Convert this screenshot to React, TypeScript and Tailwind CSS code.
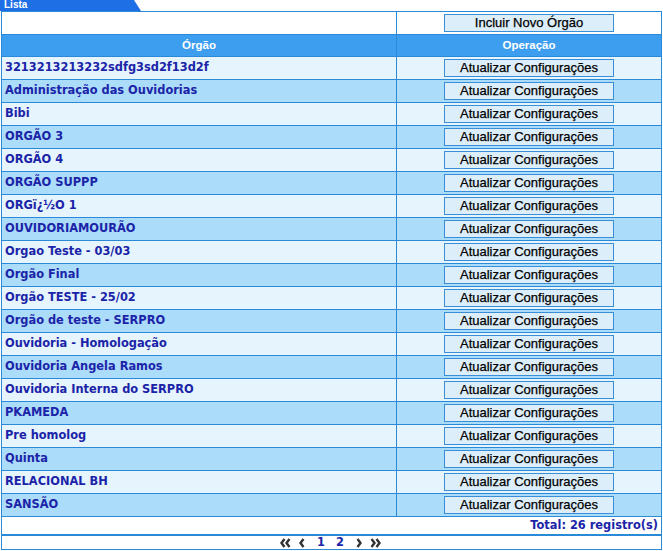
import React from "react";

const rows = [
  "3213213213232sdfg3sd2f13d2f",
  "Administração das Ouvidorias",
  "Bibi",
  "ORGÃO 3",
  "ORGÃO 4",
  "ORGÃO SUPPP",
  "ORGï¿½O 1",
  "OUVIDORIAMOURÃO",
  "Orgao Teste - 03/03",
  "Orgão Final",
  "Orgão TESTE - 25/02",
  "Orgão de teste - SERPRO",
  "Ouvidoria - Homologação",
  "Ouvidoria Angela Ramos",
  "Ouvidoria Interna do SERPRO",
  "PKAMEDA",
  "Pre homolog",
  "Quinta",
  "RELACIONAL BH",
  "SANSÃO",
];

const verdana = { fontFamily: '"DejaVu Sans", Verdana, sans-serif' };
const tahoma = { fontFamily: '"Liberation Sans", Tahoma, Arial, sans-serif' };

function Btn({ children }: { children: React.ReactNode }) {
  return (
    <div
      className="w-[170px] h-[18px] mb-[1px] border border-[#3a8ed8] bg-[#ddeefb] flex items-center justify-center text-[13px] text-black leading-none [-webkit-text-stroke:0.25px_black]"
      style={tahoma}
    >
      <span className="mt-[-1px]">{children}</span>
    </div>
  );
}

function Chev({ dir, double }: { dir: "l" | "r"; double?: boolean }) {
  const w = double ? 12 : 7;
  const pts = (x: number) =>
    dir === "l"
      ? `${x + 4},1 ${x + 1},5 ${x + 4},9`
      : `${x + 1},1 ${x + 4},5 ${x + 1},9`;
  return (
    <svg width={w} height={10} viewBox={`0 0 ${w} 10`}>
      <polyline points={pts(0.5)} fill="none" stroke="#333" strokeWidth={2.4} strokeLinejoin="miter" />
      {double && <polyline points={pts(5.5)} fill="none" stroke="#333" strokeWidth={2.4} strokeLinejoin="miter" />}
    </svg>
  );
}

export default function App() {
  return (
    <div className="w-[663px] h-[551px] bg-white relative overflow-hidden">
      {/* tab */}
      <div className="h-[11px] relative">
        <div className="absolute left-0 top-0 h-[11px] w-[141px] bg-[#1e6fe6] [clip-path:polygon(0_0,134px_0,141px_11px,0_11px)]" />
        <div
          className="absolute left-[4px] top-[-1px] text-[10px] font-bold text-white leading-[12px]"
          style={tahoma}
        >
          Lista
        </div>
      </div>
      <div className="ml-[1px] w-[661px] border-t border-l border-r border-b border-[#2b8ad8]">
        {/* row 0 */}
        <div className="flex h-[23px] border-b border-[#2b8ad8] bg-white">
          <div className="w-[395px] border-r border-[#2b8ad8]" />
          <div className="flex-1 flex items-center justify-center">
            <Btn>Incluir Novo Órgão</Btn>
          </div>
        </div>
        {/* header */}
        <div className="flex h-[21px] bg-[#3d9ef0] text-white text-[11.5px] font-bold" style={tahoma}>
          <div className="w-[395px] border-r border-[#2b8ad8] flex items-center justify-center">Órgão</div>
          <div className="flex-1 flex items-center justify-center">Operação</div>
        </div>
        {rows.map((r, i) => (
          <div
            key={i}
            className={`flex h-[23px] border-t border-[#2b8ad8] ${i % 2 === 0 ? "bg-[#e5f4fd]" : "bg-[#abdcfa]"}`}
          >
            <div
              className="w-[395px] border-r border-[#2b8ad8] flex items-center pl-[3px] text-[11.4px] font-bold text-[#1b24a8]"
              style={verdana}
            >
              {r}
            </div>
            <div className="flex-1 flex items-center justify-center">
              <Btn>Atualizar Configurações</Btn>
            </div>
          </div>
        ))}
        {/* total */}
        <div
          className="h-[18px] border-t border-[#2b8ad8] bg-white flex items-center justify-end pr-[3px] text-[11.4px] font-bold text-[#1b24a8]"
          style={verdana}
        >
          Total: 26 registro(s)
        </div>
        {/* pagination */}
        <div className="h-[15px] border-t-2 border-[#2b8ad8] bg-white flex items-center justify-center">
          <div className="flex items-center ml-[-1px]">
            <Chev dir="l" double />
            <span className="w-[7px]" />
            <Chev dir="l" />
            <span className="ml-[11px] text-[11.4px] font-bold text-[#1b24a8] leading-none" style={verdana}>1</span>
            <span className="ml-[11px] text-[11.4px] font-bold text-[#1b24a8] leading-none" style={verdana}>2</span>
            <span className="w-[12px]" />
            <Chev dir="r" />
            <span className="w-[7px]" />
            <Chev dir="r" double />
          </div>
        </div>
      </div>
    </div>
  );
}
